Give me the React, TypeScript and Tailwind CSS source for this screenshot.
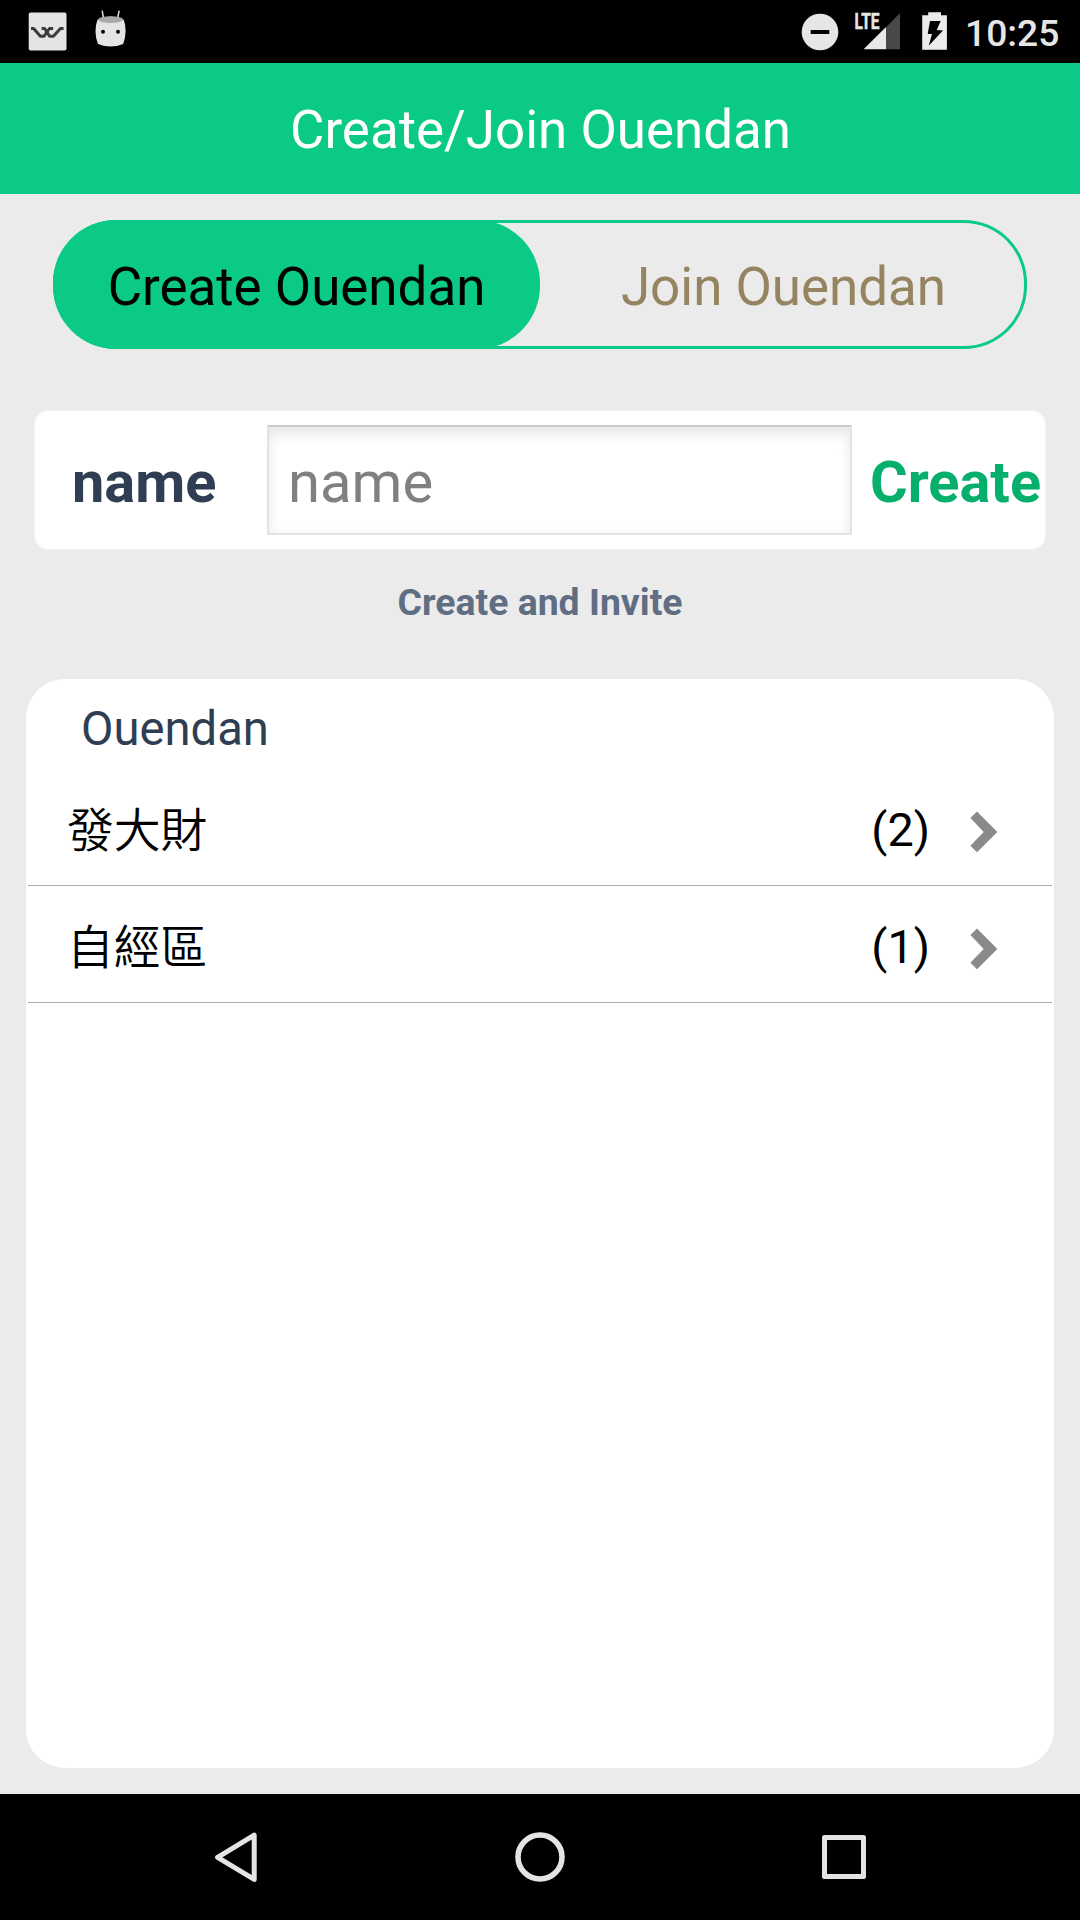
import React from "react";

const groups = [
  { name: "發大財", count: 2 },
  { name: "自經區", count: 1 },
];

function StatusBar() {
  return (
    <div className="flex h-[63px] items-start bg-black">
      <svg width="960" height="63" viewBox="0 0 960 63" className="shrink-0">
        <rect x="28.7" y="12.6" width="37.8" height="38" rx="2" fill="#e4e4e4" />
        <g fill="none" stroke="#3c3c3c" strokeWidth="3" strokeLinejoin="round">
          <path d="M31 28.500h2.600l6.800 7.700h3.600l5.500-7.700h3.600" />
          <path d="M41.600 28.500h3l5 7.700h3.800l7-7.700h3.200" />
        </g>
        <path d="M102.3 11.3l1.4 8M119 11.3l-1.6 8" stroke="#e4e4e4" strokeWidth="1.5" strokeLinecap="round" />
        <path
          d="M97.4 20q13 -7 26.4 0q2 5 1.8 11.500q-.2 7-2.400 12.500q-12.500 5-25.200 0q-2.400-5.500-2.500-12.500q-.1-6.500 1.900-11.500z"
          fill="#e4e4e4"
        />
        <ellipse cx="110.6" cy="19.6" rx="12.6" ry="3.3" fill="#a9a9a9" />
        <circle cx="103" cy="31.700" r="2" fill="#000" />
        <circle cx="118" cy="31.700" r="2" fill="#000" />
        <circle cx="820" cy="32" r="18.3" fill="#e6e6e6" />
        <rect x="810.700" y="30" width="18.600" height="4" fill="#000" />
        <text
          x="854.5"
          y="29"
          textLength="25"
          lengthAdjust="spacingAndGlyphs"
          fill="#e6e6e6"
          stroke="#e6e6e6"
          strokeWidth=".5"
          fontSize="22"
          fontWeight="700"
          fontFamily="Roboto, sans-serif"
        >
          LTE
        </text>
        <path d="M886 27.200L900 13v36.300h-14z" fill="#484848" />
        <path d="M863.600 49.300L886 27v22.300z" fill="#e8e8e8" />
        <path d="M922.200 15.200h6v-3h12.800v3h5.900v34.500h-24.700z" fill="#ebebeb" />
        <path d="M930 21h10.700l-4 9 6.300.4-14.300 15.300 3.300-11.700h-4.300z" fill="#000" />
      </svg>
      <span className="ml-[5px] mt-[9px] text-[37.200px] font-medium leading-[48px] text-[#e6e6e6]">10:25</span>
    </div>
  );
}

function Chevron() {
  return (
    <svg width="28" height="42" viewBox="0 0 28 42">
      <path d="M7 .6L27.300 20.900 7 41.200.4 34.800 13.700 20.900.4 7z" fill="#8a8a8a" />
    </svg>
  );
}

function NavBar() {
  return (
    <svg width="1080" height="126" viewBox="0 0 1080 126" className="block bg-black">
      <g fill="none" stroke="#e4e4e4" strokeLinejoin="round">
        <path d="M254.200 41.200v44.200L217.600 63.300z" strokeWidth="5" />
        <circle cx="540" cy="63" r="22" strokeWidth="5.600" />
        <rect x="824.500" y="43.500" width="39" height="39" strokeWidth="5" />
      </g>
    </svg>
  );
}

export default function App() {
  return (
    <div className="flex h-[1920px] w-[1080px] flex-col overflow-hidden bg-[#ebebeb] font-[Roboto,'Noto_Sans_CJK_TC',sans-serif]">
      <StatusBar />
      <header className="flex h-[131px] items-center justify-center bg-[#0bca85] pl-[1px] pt-[3px]">
        <h1 className="text-[52.900px] leading-[64px] text-white">Create/Join Ouendan</h1>
      </header>

      <main className="flex flex-1 flex-col">
        <div className="mx-[53px] mt-[26px] flex h-[129px] rounded-[63px] text-[52.900px] leading-[64px] shadow-[inset_0_0_0_3px_#0bca85]">
          <button className="w-[487px] rounded-[63px] bg-[#0bca85] pt-[5px] text-black">Create Ouendan</button>
          <button className="flex-1 pt-[5px] text-[#948560]">Join Ouendan</button>
        </div>

        <form className="mx-[35px] mt-[62px] flex h-[138px] items-center rounded-[14px] bg-white text-[57.700px] leading-[68px] shadow-[0_0_3px_#ffffff]">
          <label className="w-[232px] pl-[37px] pt-[4px] font-bold text-[#2f3e52]">name</label>
          <input
            placeholder="name"
            className="h-[110px] w-[585px] border-2 border-t-[#cbcbcb] border-x-[#e2e2e2] border-b-[#e4e4e4] bg-white pl-[19px] pt-[4px] text-[58px] shadow-[inset_0_10px_16px_-4px_#e6e6e6,inset_0_0_12px_#f4f4f4] placeholder:text-[#808080]"
          />
          <button type="button" className="ml-[18px] pt-[4px] font-bold text-[#07af6d]">
            Create
          </button>
        </form>

        <p className="mt-[29px] text-center text-[37.400px] font-bold leading-[48px] text-[#5f6e83]">
          Create and Invite
        </p>

        <section className="mx-[26px] mb-[26px] mt-[53px] flex-1 rounded-[39px] bg-white px-[2px]">
          <h2 className="h-[90px] pl-[53px] pt-[20px] text-[47.200px] leading-[60px] text-[#2f3e52]">Ouendan</h2>
          <ul>
            {groups.map((g) => (
              <li
                key={g.name}
                className="flex h-[117px] items-center border-b border-[#aeaeae] pl-[39px] pr-[54px] text-[46.800px] leading-[60px] text-black"
              >
                <span className="flex-1 pt-[7px] font-[350]">{g.name}</span>
                <span className="mr-[40px] pt-[6px]">({g.count})</span>
                <span className="pt-[10px]">
                  <Chevron />
                </span>
              </li>
            ))}
          </ul>
        </section>
      </main>
      <NavBar />
    </div>
  );
}
